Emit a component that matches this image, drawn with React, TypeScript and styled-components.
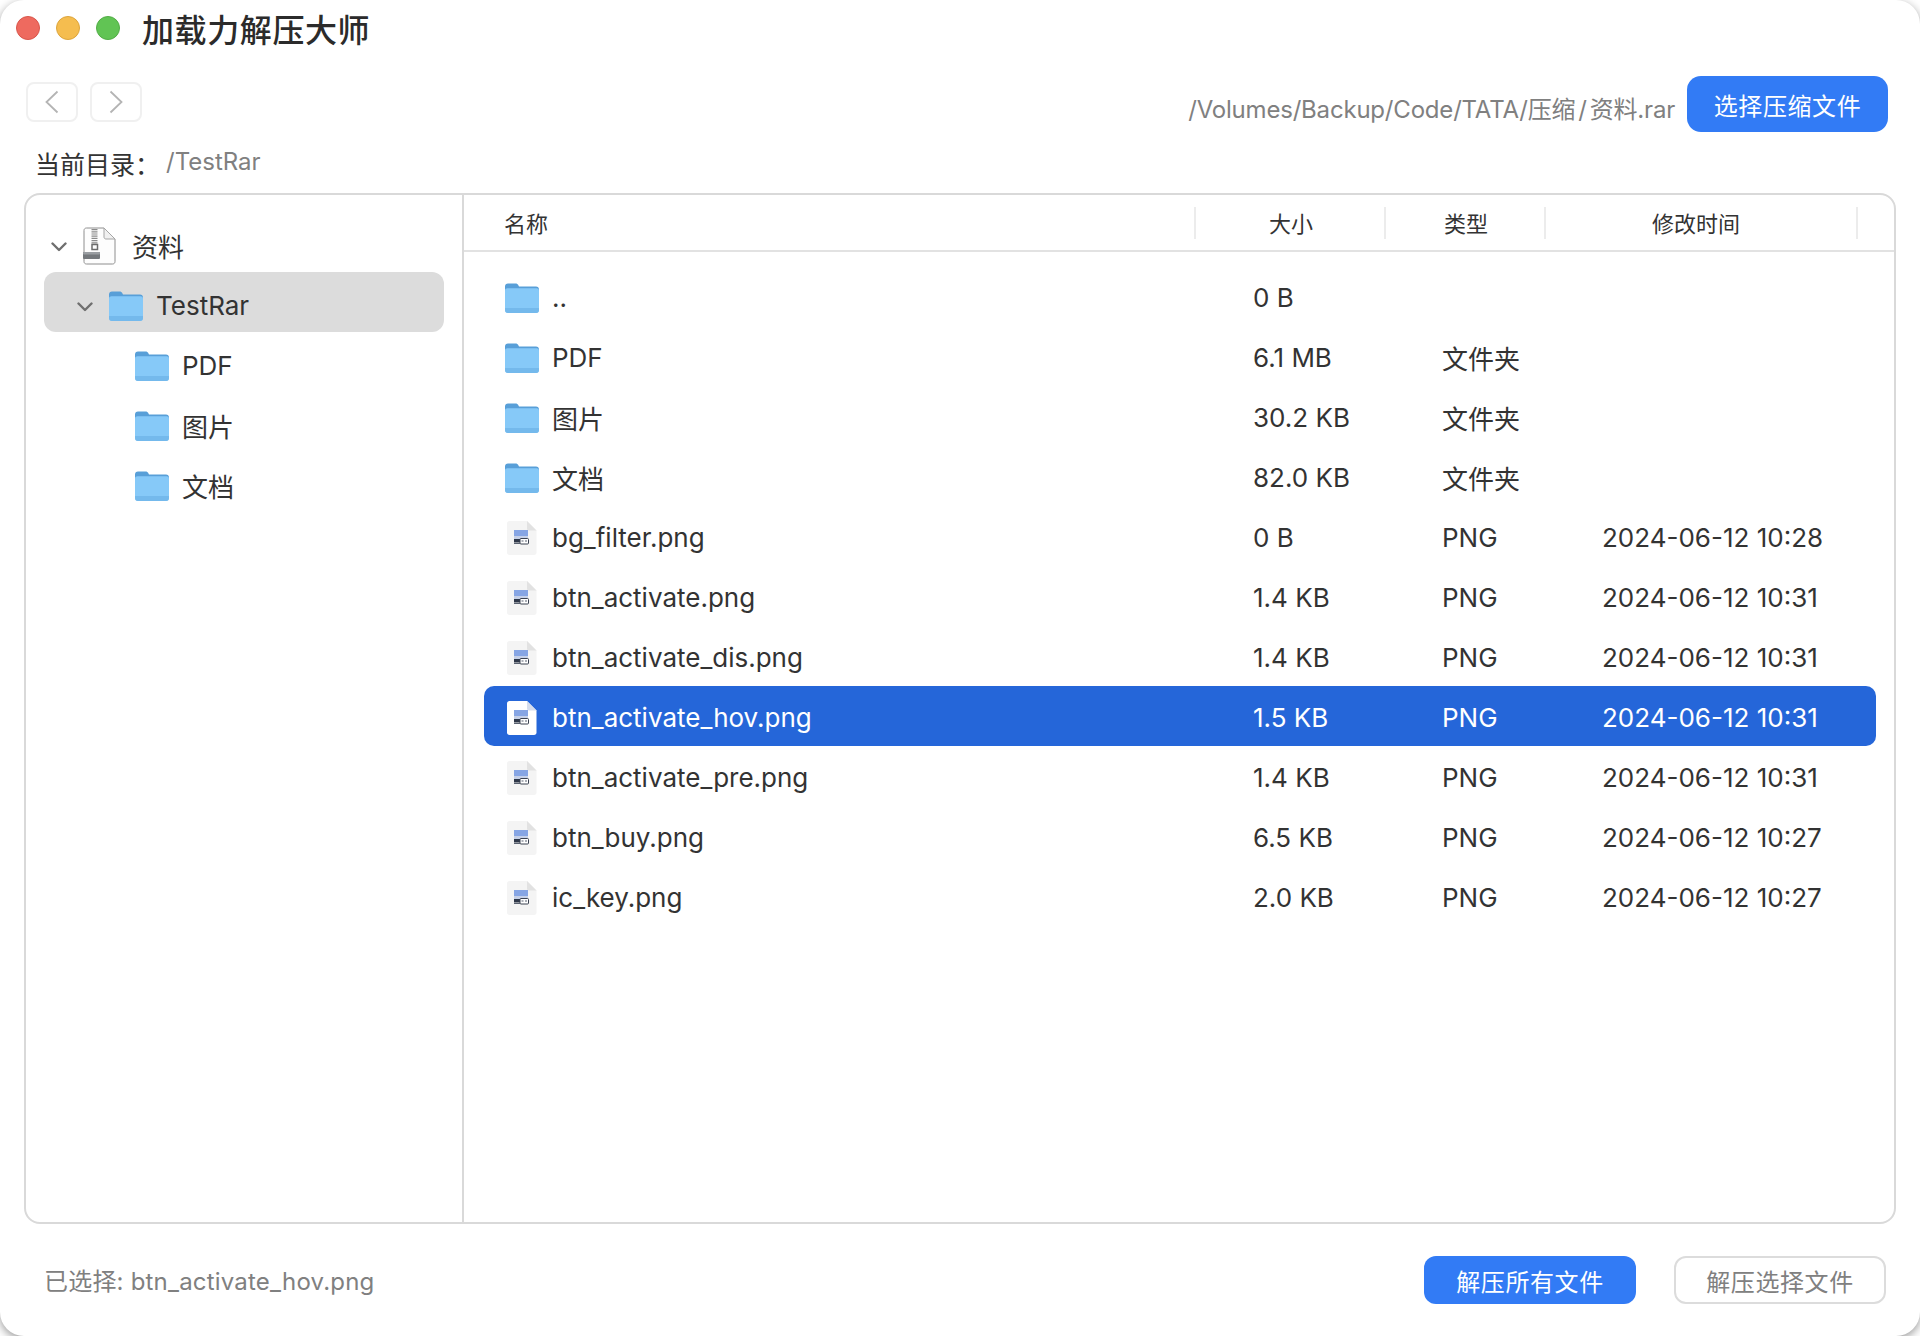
import styled, { createGlobalStyle } from 'styled-components';

interface FileRow {
  name: string;
  size: string;
  type: string;
  time: string;
  folder?: boolean;
  selected?: boolean;
}

const files: FileRow[] = [
  { name: '..', size: '0 B', type: '', time: '', folder: true },
  { name: 'PDF', size: '6.1 MB', type: '文件夹', time: '', folder: true },
  { name: '图片', size: '30.2 KB', type: '文件夹', time: '', folder: true },
  { name: '文档', size: '82.0 KB', type: '文件夹', time: '', folder: true },
  { name: 'bg_filter.png', size: '0 B', type: 'PNG', time: '2024-06-12 10:28' },
  { name: 'btn_activate.png', size: '1.4 KB', type: 'PNG', time: '2024-06-12 10:31' },
  { name: 'btn_activate_dis.png', size: '1.4 KB', type: 'PNG', time: '2024-06-12 10:31' },
  { name: 'btn_activate_hov.png', size: '1.5 KB', type: 'PNG', time: '2024-06-12 10:31', selected: true },
  { name: 'btn_activate_pre.png', size: '1.4 KB', type: 'PNG', time: '2024-06-12 10:31' },
  { name: 'btn_buy.png', size: '6.5 KB', type: 'PNG', time: '2024-06-12 10:27' },
  { name: 'ic_key.png', size: '2.0 KB', type: 'PNG', time: '2024-06-12 10:27' },
];

function FolderIcon() {
  return (
    <svg width="34" height="30" viewBox="0 0 34 30">
      <path d="M0 3.5C0 1.6 1.2.5 3 .5h7.5c1.2 0 1.8.4 2.6 1.3L14 3.5h17c1.8 0 3 1.2 3 3V12H0z" fill="#589fd8" />
      <path d="M0 7.5C0 6 1 5.2 2.5 5.2h29C33 5.2 34 6 34 7.5V27c0 1.8-1.2 3-3 3H3c-1.8 0-3-1.2-3-3z" fill="#86c9f8" />
      <path d="M0 25h34v2c0 1.800-1.200 3-3 3H3c-1.800 0-3-1.200-3-3z" fill="#74b9ec" />
    </svg>
  );
}

function ImageFileIcon({ light }: { light?: boolean }) {
  return (
    <svg width="30" height="34" viewBox="0 0 30 34">
      <path d="M2.500 0H20l9.500 9.500V31.500c0 1.400-1 2.500-2.500 2.500H2.500C1 34 0 33 0 31.500v-29C0 1 1 0 2.500 0z" fill={light ? '#ffffff' : '#f4f4f4'} />
      <path d="M20 0l9.500 9.500H22c-1.200 0-2-.8-2-2z" fill={light ? '#d5dded' : '#e2e2e2'} />
      <rect x="7" y="9" width="14" height="6" fill="#86a5e4" />
      <rect x="7" y="15" width="14" height="3" fill="#c5d0e8" />
      <rect x="7" y="18" width="7" height="3.500" fill="#2f3849" />
      <rect x="13" y="17.500" width="8.500" height="5.500" rx="1" fill="#ffffff" stroke="#3b4250" strokeWidth="1" />
      <path d="M14.500 20h2M18 20h2M7 22.500h6" stroke="#596170" strokeWidth="1.200" />
    </svg>
  );
}

function ZipIcon() {
  return (
    <svg width="34" height="38" viewBox="0 0 34 38">
      <path d="M3.500 1H21l11 11v22.500c0 1.500-1 2.500-2.500 2.500h-26C2 37 1 36 1 34.500v-31C1 2 2 1 3.500 1z" fill="#fdfdfd" stroke="#8e8e8e" strokeWidth="1" />
      <path d="M21 1l11 11h-9c-1.200 0-2-.8-2-2z" fill="#f0f0f0" stroke="#a5a5a5" strokeWidth="1" />
      <path d="M11.500 2v15" stroke="#8a8a8a" strokeWidth="6" strokeDasharray="1.200 1" />
      <rect x="9" y="17.500" width="5.500" height="5" fill="none" stroke="#6c6c6c" strokeWidth="1.500" />
      <rect x="0" y="25" width="17" height="7" rx="1" fill="#74787c" />
      <rect x="0" y="25" width="17" height="2.500" rx="1" fill="#9a9ea2" />
    </svg>
  );
}

function Chevron({ dir }: { dir: 'left' | 'right' }) {
  return (
    <svg width="14" height="24" viewBox="0 0 14 24">
      <path d={dir === 'left' ? 'M12.500 1.500L1.500 12l11 10.500' : 'M1.500 1.500L12.500 12l-11 10.500'} fill="none" stroke="#b4b4b4" strokeWidth="1.800" />
    </svg>
  );
}

function TreeArrow() {
  return (
    <svg width="16" height="10" viewBox="0 0 16 10">
      <path d="M1.500 1.500L8 8l6.500-6.500" fill="none" stroke="#6f6f6f" strokeWidth="2.400" strokeLinecap="round" strokeLinejoin="round" />
    </svg>
  );
}

export default function App() {
  return (
    <Page>
      <GlobalStyle />
      <Window>
        <TitleBar>
          <Light $color="#ee6a5f" $edge="#d9564b" />
          <Light $color="#f5bd4f" $edge="#dda53c" />
          <Light $color="#61c454" $edge="#52ad46" />
          <Title>加载力解压大师</Title>
        </TitleBar>

        <Toolbar>
          <NavButtons>
            <NavButton><Chevron dir="left" /></NavButton>
            <NavButton><Chevron dir="right" /></NavButton>
          </NavButtons>
          <FilePath>
            /Volumes/Backup/Code/TATA/压缩<PathSlash>/</PathSlash>资料.rar
          </FilePath>
          <PrimaryButton $wide>选择压缩文件</PrimaryButton>
        </Toolbar>

        <CurrentDir>
          <DirLabel>当前目录：</DirLabel>
          <DirValue>/TestRar</DirValue>
        </CurrentDir>

        <Panel>
          <Sidebar>
            <TreeRow $level={0}>
              <ArrowSlot><TreeArrow /></ArrowSlot>
              <ZipIcon />
              <TreeLabel $gap={15}>资料</TreeLabel>
            </TreeRow>
            <TreeRow $level={1} $active>
              <ArrowSlot><TreeArrow /></ArrowSlot>
              <FolderIcon />
              <TreeLabel $gap={13}>TestRar</TreeLabel>
            </TreeRow>
            {['PDF', '图片', '文档'].map((label) => (
              <TreeRow key={label} $level={2}>
                <ArrowSlot />
                <FolderIcon />
                <TreeLabel $gap={13}>{label}</TreeLabel>
              </TreeRow>
            ))}
          </Sidebar>

          <Content>
            <TableHead>
              <HeadCell $name>名称</HeadCell>
              <HeadCell $shift={2}>大小</HeadCell>
              <HeadCell $shift={2}>类型</HeadCell>
              <HeadCell $shift={-10}>修改时间</HeadCell>
            </TableHead>
            <TableBody>
              {files.map((file) => (
                <Row key={file.name} $selected={file.selected}>
                  <NameCell>
                    <IconSlot>
                      {file.folder ? <FolderIcon /> : <ImageFileIcon light={file.selected} />}
                    </IconSlot>
                    {file.name}
                  </NameCell>
                  <span>{file.size}</span>
                  <span>{file.type}</span>
                  <span>{file.time}</span>
                </Row>
              ))}
            </TableBody>
          </Content>
        </Panel>

        <Footer>
          <Selection>已选择: btn_activate_hov.png</Selection>
          <PrimaryButton>解压所有文件</PrimaryButton>
          <GhostButton>解压选择文件</GhostButton>
        </Footer>
      </Window>
    </Page>
  );
}

const fontStack = `Inter, "Noto Sans CJK SC", sans-serif`;

const GlobalStyle = createGlobalStyle`
  html, body {
    margin: 0;
    padding: 0;
  }
`;

const Page = styled.div`
  width: 1920px;
  height: 1336px;
  background: #fff;
  font-family: ${fontStack};
  overflow: hidden;
`;

const Window = styled.div`
  height: 100%;
  box-sizing: border-box;
  display: flex;
  flex-direction: column;
  background: #fff;
  border-radius: 24px;
  box-shadow: 0 3px 10px rgba(0, 0, 0, 0.4);
  color: #333;
`;

const TitleBar = styled.div`
  height: 56px;
  display: flex;
  align-items: center;
  padding-left: 16px;
  gap: 16px;
  flex-shrink: 0;
`;

const Light = styled.span<{ $color: string; $edge: string }>`
  width: 24px;
  height: 24px;
  box-sizing: border-box;
  border-radius: 50%;
  background: ${(p) => p.$color};
  border: 1px solid ${(p) => p.$edge};
`;

const Title = styled.h1`
  margin: 6px 0 0 6px;
  font-size: 32px;
  font-weight: 500;
  line-height: 44px;
  letter-spacing: 0.6px;
  color: #2b2b2b;
`;

const Toolbar = styled.div`
  height: 56px;
  margin-top: 20px;
  padding: 0 32px 0 26px;
  display: flex;
  align-items: flex-start;
  flex-shrink: 0;
`;

const NavButtons = styled.div`
  display: flex;
  gap: 12px;
  margin-top: 6px;
  margin-right: auto;
`;

const NavButton = styled.div`
  width: 52px;
  height: 40px;
  box-sizing: border-box;
  display: flex;
  align-items: center;
  justify-content: center;
  border: 2px solid #f0f0f0;
  border-radius: 8px;
`;

const FilePath = styled.div`
  font-size: 24px;
  line-height: 34px;
  letter-spacing: -0.2px;
  margin: 17px 12px 0 0;
  color: #808080;
`;

const PathSlash = styled.span`
  margin: 0 3px;
`;

const PrimaryButton = styled.button<{ $wide?: boolean }>`
  width: ${(p) => (p.$wide ? '201px' : '212px')};
  height: ${(p) => (p.$wide ? '56px' : '48px')};
  flex-shrink: 0;
  border: none;
  border-radius: ${(p) => (p.$wide ? '14px' : '12px')};
  background: #327bf5;
  color: #fff;
  font-family: inherit;
  font-size: 24px;
  letter-spacing: 0.6px;
  padding: 0;
`;

const CurrentDir = styled.div`
  height: 61px;
  padding-left: 35px;
  display: flex;
  align-items: center;
  flex-shrink: 0;
`;

const DirLabel = styled.span`
  font-size: 25px;
  color: #333;
`;

const DirValue = styled.span`
  font-size: 24px;
  color: #808080;
  margin: -3px 0 0 6px;
`;

const Panel = styled.div`
  height: 1031px;
  margin: 0 24px 0 24px;
  box-sizing: border-box;
  border: 2px solid #d9d9d9;
  border-radius: 16px;
  display: grid;
  grid-template-columns: 438px 1fr;
  overflow: hidden;
  flex-shrink: 0;
`;

const Sidebar = styled.div`
  padding: 17px 0 0 18px;
  border-right: 2px solid #d9d9d9;
`;

const TreeRow = styled.div<{ $level: number; $active?: boolean }>`
  width: 400px;
  height: 60px;
  box-sizing: border-box;
  display: flex;
  align-items: center;
  padding-top: 7px;
  padding-left: ${(p) => 7 + p.$level * 26}px;
  border-radius: 12px;
  background: ${(p) => (p.$active ? '#dcdcdc' : 'transparent')};
`;

const ArrowSlot = styled.span`
  width: 32px;
  display: flex;
  align-items: center;
  flex-shrink: 0;
  margin-top: 3px;
`;

const TreeLabel = styled.span<{ $gap: number }>`
  margin-left: ${(p) => p.$gap}px;
  font-size: 26px;
  color: #333;
`;

const Content = styled.div`
  display: flex;
  flex-direction: column;
  min-width: 0;
`;

const TableHead = styled.div`
  height: 57px;
  box-sizing: border-box;
  display: grid;
  grid-template-columns: 732px 190px 160px 312px;
  align-items: center;
  border-bottom: 2px solid #e2e2e2;
  flex-shrink: 0;
`;

const HeadCell = styled.div<{ $name?: boolean; $shift?: number }>`
  height: 32px;
  box-sizing: border-box;
  display: flex;
  align-items: center;
  justify-content: ${(p) => (p.$name ? 'flex-start' : 'center')};
  padding-left: ${(p) => (p.$name ? '40px' : p.$shift && p.$shift > 0 ? `${p.$shift}px` : '0')};
  padding-right: ${(p) => (p.$shift && p.$shift < 0 ? `${-p.$shift}px` : '0')};
  padding-bottom: 2px;
  border-right: 2px solid #ececec;
  font-size: 22px;
  color: #333;
`;

const TableBody = styled.div`
  padding: 14px 18px 0 20px;
`;

const Row = styled.div<{ $selected?: boolean }>`
  height: 60px;
  box-sizing: border-box;
  padding-top: 3px;
  display: grid;
  grid-template-columns: 769px 189px 160px 1fr;
  align-items: center;
  border-radius: 10px;
  font-size: 26px;
  background: ${(p) => (p.$selected ? '#2566d9' : 'transparent')};
  color: ${(p) => (p.$selected ? '#fff' : '#333')};
`;

const NameCell = styled.span`
  display: flex;
  align-items: center;
  padding-left: 21px;
`;

const IconSlot = styled.span`
  width: 34px;
  height: 34px;
  margin-right: 13px;
  display: flex;
  align-items: center;
  justify-content: center;
  flex-shrink: 0;
`;

const Footer = styled.div`
  flex: 1;
  display: flex;
  align-items: center;
  gap: 38px;
  padding: 0 34px 0 44px;
`;

const Selection = styled.div`
  margin: -2px auto 0 0;
  font-size: 24px;
  letter-spacing: 0.2px;
  color: #808080;
`;

const GhostButton = styled.button`
  width: 212px;
  height: 48px;
  box-sizing: border-box;
  border: 2px solid #dcdcdc;
  border-radius: 12px;
  background: #fff;
  color: #808080;
  font-family: inherit;
  font-size: 24px;
  letter-spacing: 0.6px;
  padding: 0;
`;
